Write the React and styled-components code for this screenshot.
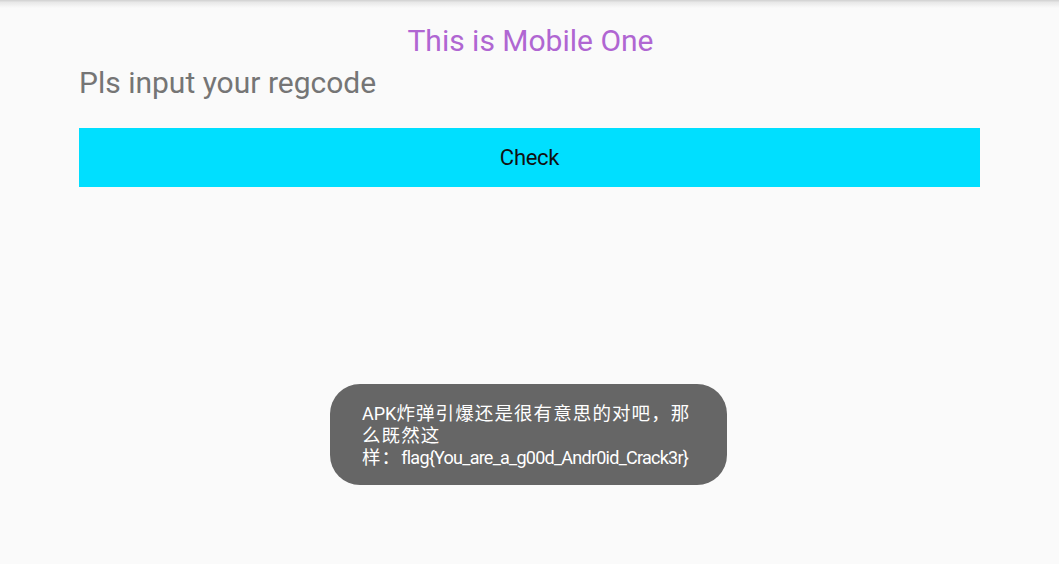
import React from "react";
import styled, { createGlobalStyle } from "styled-components";

const GlobalStyle = createGlobalStyle`
  html, body {
    margin: 0;
    padding: 0;
    background: #fafafa;
  }
  body {
    font-family: Roboto, "Noto Sans CJK SC", sans-serif;
  }
`;

const Screen = styled.div`
  position: relative;
  width: 1059px;
  height: 564px;
  background: #fafafa;
  overflow: hidden;
`;

const TopShadow = styled.div`
  height: 8px;
  background: linear-gradient(to bottom, #d0d0d0 0%, #e8e8e8 30%, #fafafa 100%);
`;

const Content = styled.div`
  display: flex;
  flex-direction: column;
  padding: 0 79px;
`;

const Title = styled.div`
  color: #b066d2;
  font-size: 30px;
  line-height: 36px;
  text-align: center;
  margin-top: 15px;
  padding-left: 2px;
`;

const Hint = styled.div`
  color: #757575;
  font-size: 30px;
  line-height: 36px;
  margin-top: 6px;
`;

const CheckButton = styled.div`
  margin-top: 27px;
  height: 59px;
  background: #00dfff;
  color: #111;
  font-size: 22px;
  letter-spacing: -0.3px;
  display: flex;
  align-items: center;
  justify-content: center;
`;

const ToastLayer = styled.div`
  position: absolute;
  left: 0;
  right: 0;
  top: 384px;
  display: flex;
  justify-content: center;
  padding-right: 2px;
`;

const Toast = styled.div`
  width: 397px;
  height: 101px;
  box-sizing: border-box;
  padding: 19px 20px 0 32px;
  border-radius: 30px;
  background: #666666;
  color: #ffffff;
  font-size: 18px;
  line-height: 22px;
  white-space: nowrap;
  font-family: Roboto, "Noto Sans CJK SC", sans-serif;
`;

const Cjk = styled.span`
  font-size: 18.5px;
  letter-spacing: 1.1px;
`;

const Latin = styled.span`
  font-size: 18px;
  letter-spacing: ${(p) => p.$tight ? "-0.75px" : "0"};
`;

export default function App() {
  return (
    <Screen>
      <GlobalStyle />
      <TopShadow />
      <Content>
        <Title>This is Mobile One</Title>
        <Hint>Pls input your regcode</Hint>
        <CheckButton>Check</CheckButton>
      </Content>
      <ToastLayer>
        <Toast>
          <Latin>APK</Latin>
          <Cjk>炸弹引爆还是很有意思的对吧，那</Cjk>
          <br />
          <Cjk>么既然这</Cjk>
          <br />
          <Cjk>样：</Cjk>
          <Latin $tight>flag{"{"}You_are_a_g00d_Andr0id_Crack3r{"}"}</Latin>
        </Toast>
      </ToastLayer>
    </Screen>
  );
}
